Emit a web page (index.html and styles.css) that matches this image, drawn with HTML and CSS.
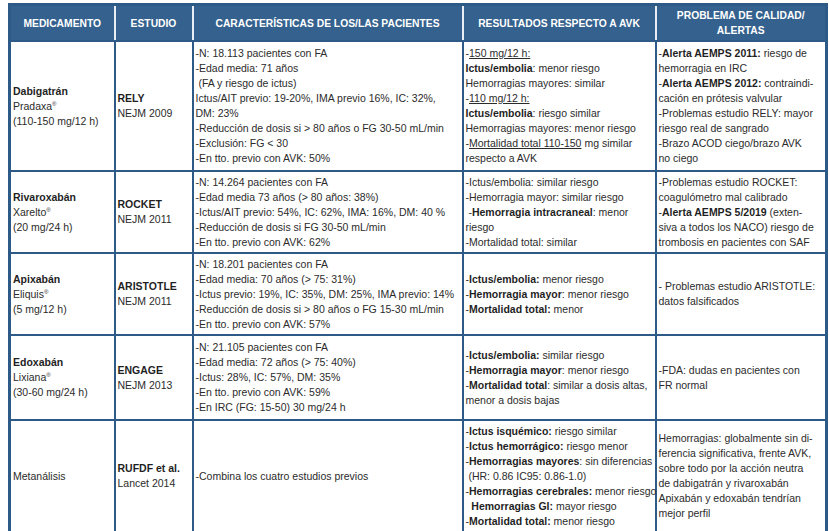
FILE: index.html
```html
<!DOCTYPE html>
<html lang="es">
<head>
<meta charset="utf-8">
<title>Anticoagulantes</title>
<link rel="stylesheet" href="styles.css">
</head>
<body>
<div class="page">
<table class="grid">
  <colgroup>
    <col class="c1"><col class="c2"><col class="c3"><col class="c4"><col class="c5">
  </colgroup>
  <thead>
    <tr class="head">
      <th>MEDICAMENTO</th>
      <th>ESTUDIO</th>
      <th>CARACTERÍSTICAS DE LOS/LAS PACIENTES</th>
      <th>RESULTADOS RESPECTO A AVK</th>
      <th>PROBLEMA DE CALIDAD/<br>ALERTAS</th>
    </tr>
  </thead>
  <tbody>
    <tr class="r1">
      <td><b>Dabigatrán</b><br>Pradaxa<sup>®</sup><br>(110-150 mg/12 h)</td>
      <td><b>RELY</b><br>NEJM 2009</td>
      <td>-N: 18.113 pacientes con FA<br>-Edad media: 71 años<br>&nbsp;(FA y riesgo de ictus)<br>Ictus/AIT previo: 19-20%, IMA previo 16%, IC: 32%,<br>DM: 23%<br>-Reducción de dosis si &gt; 80 años o FG 30-50 mL/min<br>-Exclusión: FG &lt; 30<br>-En tto. previo con AVK: 50%</td>
      <td>-<u>150 mg/12 h:</u><br><b>Ictus/embolia</b>: menor riesgo<br>Hemorragias mayores: similar<br>-<u>110 mg/12 h:</u><br><b>Ictus/embolia</b>: riesgo similar<br>Hemorragias mayores: menor riesgo<br>-<u>Mortalidad total 110-150</u> mg similar<br>respecto a AVK</td>
      <td>-<b>Alerta AEMPS 2011:</b> riesgo de<br>hemorragia en IRC<br>-<b>Alerta AEMPS 2012:</b> contraindi-<br>cación en prótesis valvular<br>-Problemas estudio RELY: mayor<br>riesgo real de sangrado<br>-Brazo ACOD ciego/brazo AVK<br>no ciego</td>
    </tr>
    <tr class="r2">
      <td><b>Rivaroxabán</b><br>Xarelto<sup>®</sup><br>(20 mg/24 h)</td>
      <td><b>ROCKET</b><br>NEJM 2011</td>
      <td>-N: 14.264 pacientes con FA<br>-Edad media 73 años (&gt; 80 años: 38%)<br>-Ictus/AIT previo: 54%, IC: 62%, IMA: 16%, DM: 40 %<br>-Reducción de dosis si FG 30-50 mL/min<br>-En tto. previo con AVK: 62%</td>
      <td>-Ictus/embolia: similar riesgo<br>-Hemorragia mayor: similar riesgo<br>&nbsp;-<b>Hemorragia intracraneal</b>: menor<br>riesgo<br>-Mortalidad total: similar</td>
      <td>-Problemas estudio ROCKET:<br>coagulómetro mal calibrado<br>-<b>Alerta AEMPS 5/2019</b> (exten-<br>siva a todos los NACO) riesgo de<br>trombosis en pacientes con SAF</td>
    </tr>
    <tr class="r3">
      <td><b>Apixabán</b><br>Eliquis<sup>®</sup><br>(5 mg/12 h)</td>
      <td><b>ARISTOTLE</b><br>NEJM 2011</td>
      <td>-N: 18.201 pacientes con FA<br>-Edad media: 70 años (&gt; 75: 31%)<br>-Ictus previo: 19%, IC: 35%, DM: 25%, IMA previo: 14%<br>-Reducción de dosis si &gt; 80 años o FG 15-30 mL/min<br>-En tto. previo con AVK: 57%</td>
      <td>-<b>Ictus/embolia:</b> menor riesgo<br>-<b>Hemorragia mayor</b>: menor riesgo<br>-<b>Mortalidad total:</b> menor</td>
      <td>- Problemas estudio ARISTOTLE:<br>datos falsificados</td>
    </tr>
    <tr class="r4">
      <td><b>Edoxabán</b><br>Lixiana<sup>®</sup><br>(30-60 mg/24 h)</td>
      <td><b>ENGAGE</b><br>NEJM 2013</td>
      <td>-N: 21.105 pacientes con FA<br>-Edad media: 72 años (&gt; 75: 40%)<br>-Ictus: 28%, IC: 57%, DM: 35%<br>-En tto. previo con AVK: 59%<br>-En IRC (FG: 15-50) 30 mg/24 h</td>
      <td>-<b>Ictus/embolia:</b> similar riesgo<br>-<b>Hemorragia mayor</b>: menor riesgo<br>-<b>Mortalidad total</b>: similar a dosis altas,<br>menor a dosis bajas</td>
      <td>-FDA: dudas en pacientes con<br>FR normal</td>
    </tr>
    <tr class="r5">
      <td>Metanálisis</td>
      <td><b>RUFDF et al.</b><br>Lancet 2014</td>
      <td>-Combina los cuatro estudios previos</td>
      <td>-<b>Ictus isquémico:</b> riesgo similar<br>-<b>Ictus hemorrágico:</b> riesgo menor<br>-<b>Hemorragias mayores</b>: sin diferencias<br>&nbsp;(HR: 0.86 IC95: 0.86-1.0)<br>-<b>Hemorragias cerebrales:</b> menor riesgo<br>&nbsp;&nbsp;<b>Hemorragias GI:</b> mayor riesgo<br>-<b>Mortalidad total:</b> menor riesgo</td>
      <td>Hemorragias: globalmente sin di-<br>ferencia significativa, frente AVK,<br>sobre todo por la acción neutra<br>de dabigatrán y rivaroxabán<br>Apixabán y edoxabán tendrían<br>mejor perfil</td>
    </tr>
  </tbody>
</table>
</div>
</body>
</html>
```

FILE: styles.css
```css
html, body {
  margin: 0;
  padding: 0;
  background: #ffffff;
}

.page {
  padding: 3px 0 0 8px;
}

.grid {
  border-collapse: collapse;
  table-layout: fixed;
  width: 817px;
  font-family: "Liberation Sans", Arial, sans-serif;
  font-size: 10.5px;
  color: #2b2b2b;
  border: 3px solid #2e5a87;
}

.c1 { width: 105px; }
.c2 { width: 78px; }
.c3 { width: 270px; }
.c4 { width: 193px; }
.c5 { width: 171px; }

.grid th {
  background: #34618d;
  color: #ffffff;
  font-weight: bold;
  font-size: 10.3px;
  text-align: center;
  vertical-align: middle;
  line-height: 15px;
  padding: 2px 2px;
  border-left: 2px solid #e9eef4;
  border-right: 2px solid #e9eef4;
  border-top: 3px solid #2e5a87;
  border-bottom: 2px solid #2e5a87;
}

.grid th:first-child { border-left: 3px solid #2e5a87; }
.grid th:last-child { border-right: 3px solid #2e5a87; }

.grid td {
  border: 2px solid #2e5a87;
  vertical-align: middle;
  text-align: left;
  padding: 2px 2px 2px 2px;
  line-height: 15px;
  white-space: nowrap;
}

.grid b { font-weight: bold; color: #1f1f1f; }

.grid u { text-decoration: underline; text-underline-offset: 1px; }

.grid sup {
  font-size: 6px;
  line-height: 0;
  vertical-align: 4px;
}

.head { height: 35px; }
.r1 { height: 130px; }
.r2 { height: 82px; }
.r3 { height: 82px; }
.r4 { height: 85px; }
.r5 { height: 113px; }
```
